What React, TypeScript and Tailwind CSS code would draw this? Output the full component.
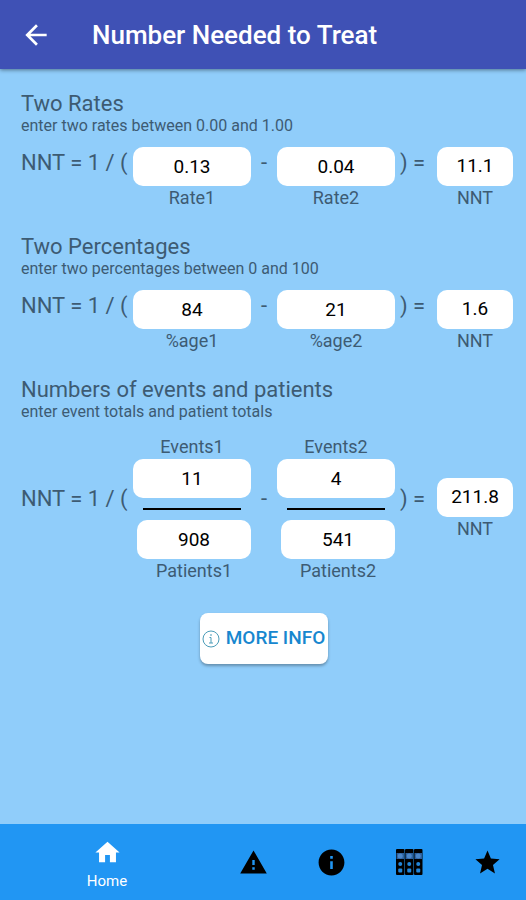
import React, { useState } from 'react';
import { MdArrowBack, MdHome, MdInfo, MdStar, MdWarning } from 'react-icons/md';

interface FieldProps {
  id: string;
  label: string;
  value: string;
  onChange: (value: string) => void;
  labelOnTop?: boolean;
  narrow?: boolean;
}

const Field: React.FC<FieldProps> = ({ id, label, value, onChange, labelOnTop, narrow }) => (
  <div className={`flex min-w-0 ${labelOnTop ? 'flex-col-reverse' : 'flex-col'} ${narrow ? 'pl-1' : ''}`}>
    <input
      id={id}
      inputMode="decimal"
      value={value}
      onChange={(e) => onChange(e.target.value)}
      className="h-[39px] w-full rounded-[10px] bg-white text-center text-[19px] text-black outline-none"
    />
    <label htmlFor={id} className="text-center text-lg leading-6">
      {label}
    </label>
  </div>
);

const Result: React.FC<{ id: string; value: string }> = ({ id, value }) => (
  <div className="flex flex-col">
    <output
      id={id}
      className="flex h-[39px] items-center justify-center rounded-[10px] bg-white text-[19px] text-black"
    >
      {value}
    </output>
    <label htmlFor={id} className="text-center text-lg leading-6">
      NNT
    </label>
  </div>
);

interface SectionProps {
  title: string;
  hint: string;
  children: React.ReactNode;
}

const Section: React.FC<SectionProps> = ({ title, hint, children }) => (
  <section>
    <h2 className="text-[22px] leading-6">{title}</h2>
    <p className="text-base leading-5">{hint}</p>
    {children}
  </section>
);

interface FormulaProps {
  left: React.ReactNode;
  right: React.ReactNode;
  result: React.ReactNode;
  centered?: boolean;
}

// NNT = 1 / ( left - right ) = result
const Formula: React.FC<FormulaProps> = ({ left, right, result, centered }) => {
  const symbol = `text-[22px] leading-8 ${centered ? 'mb-5' : ''}`;
  return (
    <div
      className={`grid grid-cols-[112px_minmax(0,1fr)_26px_minmax(0,1fr)_42px_76px] ${
        centered ? 'mt-[13px] items-center' : 'mt-[11px]'
      }`}
    >
      <span className={symbol}>NNT = 1 / (</span>
      {left}
      <span className={`text-center ${symbol}`}>-</span>
      {right}
      <span className={`pl-[5px] ${symbol}`}>) =</span>
      {result}
    </div>
  );
};

// NNT from two event rates, to one decimal place
const nnt = (a: number, b: number) => {
  const result = 1 / (a - b);
  return Number.isFinite(result) ? Math.abs(result).toFixed(1) : '';
};

const BinderIcon = () => (
  <svg width="28" height="28" viewBox="0 0 28 28" aria-hidden="true">
    {[1, 10, 19].map((x) => (
      <g key={x}>
        <rect x={x} y="1" width="8.500" height="26" rx="1" fill="#000" />
        <rect x={x + 0.5} y="5" width="7.500" height="6" fill="#2c5f9c" />
        <circle cx={x + 4.25} cy="8" r="2.500" fill="#4a86c8" />
        <circle cx={x + 4.25} cy="16" r="2" fill="#2187db" />
        <rect x={x + 2.25} y="20.500" width="4" height="4" rx="1" fill="#2187db" />
      </g>
    ))}
  </svg>
);

const TABS = [
  { name: 'Warnings', href: '#warnings', icon: <MdWarning size={29} /> },
  { name: 'About', href: '#about', icon: <MdInfo size={31} /> },
  { name: 'Library', href: '#library', icon: <BinderIcon /> },
  { name: 'Favourites', href: '#favourites', icon: <MdStar size={29} /> },
];

const App: React.FC = () => {
  const [values, setValues] = useState({
    rate1: '0.13',
    rate2: '0.04',
    pct1: '84',
    pct2: '21',
    events1: '11',
    events2: '4',
    patients1: '908',
    patients2: '541',
  });

  const field = (id: keyof typeof values) => ({
    id,
    value: values[id],
    onChange: (value: string) => setValues((prev) => ({ ...prev, [id]: value })),
  });
  const num = (id: keyof typeof values) => parseFloat(values[id]);

  return (
    <div className="flex min-h-screen flex-col bg-[#90cdfa] font-['Roboto',sans-serif] text-[#3d5b73]">
      <header className="z-10 flex h-[69px] items-center bg-[#3f51b5] pl-5 text-white shadow-[0_1px_4px_rgba(0,0,0,0.45)]">
        <button type="button" aria-label="Back" className="mr-10">
          <MdArrowBack size={32} />
        </button>
        <h1 className="text-[26px] font-medium leading-8">Number Needed to Treat</h1>
      </header>

      <main className="flex flex-1 flex-col gap-[25px] pb-6 pl-[21px] pr-[13px] pt-[23px]">
        <Section title="Two Rates" hint="enter two rates between 0.00 and 1.00">
          <Formula
            left={<Field {...field('rate1')} label="Rate1" />}
            right={<Field {...field('rate2')} label="Rate2" />}
            result={<Result id="rateNnt" value={nnt(num('rate1'), num('rate2'))} />}
          />
        </Section>

        <Section title="Two Percentages" hint="enter two percentages between 0 and 100">
          <Formula
            left={<Field {...field('pct1')} label="%age1" />}
            right={<Field {...field('pct2')} label="%age2" />}
            result={<Result id="pctNnt" value={nnt(num('pct1') / 100, num('pct2') / 100)} />}
          />
        </Section>

        <Section title="Numbers of events and patients" hint="enter event totals and patient totals">
          <Formula
            centered
            left={
              <div>
                <Field {...field('events1')} label="Events1" labelOnTop />
                <hr className="m-[10px] border-t-2 border-black" />
                <Field {...field('patients1')} label="Patients1" narrow />
              </div>
            }
            right={
              <div>
                <Field {...field('events2')} label="Events2" labelOnTop />
                <hr className="m-[10px] border-t-2 border-black" />
                <Field {...field('patients2')} label="Patients2" narrow />
              </div>
            }
            result={
              <Result
                id="eventNnt"
                value={nnt(num('events1') / num('patients1'), num('events2') / num('patients2'))}
              />
            }
          />
        </Section>

        <div className="flex justify-center pr-[7px] pt-[5px]">
          <button
            type="button"
            className="flex h-[51px] w-32 items-center justify-center gap-[6px] whitespace-nowrap rounded-lg bg-white text-[19px] font-medium text-[#1787cf] shadow-[0_2px_3px_rgba(0,0,0,0.3)]"
          >
            <svg width="18" height="18" viewBox="0 0 18 18" fill="none" stroke="#4b9cb8" aria-hidden="true">
              <circle cx="9" cy="9" r="8" />
              <path d="M8 5h2M7.500 7.500h1.500V13M7 13h4" />
            </svg>
            MORE INFO
          </button>
        </div>
      </main>

      <nav className="flex h-[76px] bg-[#2196f3] text-black">
        <a href="#home" className="flex flex-1 flex-col items-center justify-center gap-1 pt-1 text-white">
          <MdHome size={29} />
          <span className="text-[15px] leading-5">Home</span>
        </a>
        {TABS.map((tab) => (
          <a
            key={tab.name}
            href={tab.href}
            aria-label={tab.name}
            className="flex w-[78px] items-center justify-center"
          >
            {tab.icon}
          </a>
        ))}
      </nav>
    </div>
  );
};

export default App;
